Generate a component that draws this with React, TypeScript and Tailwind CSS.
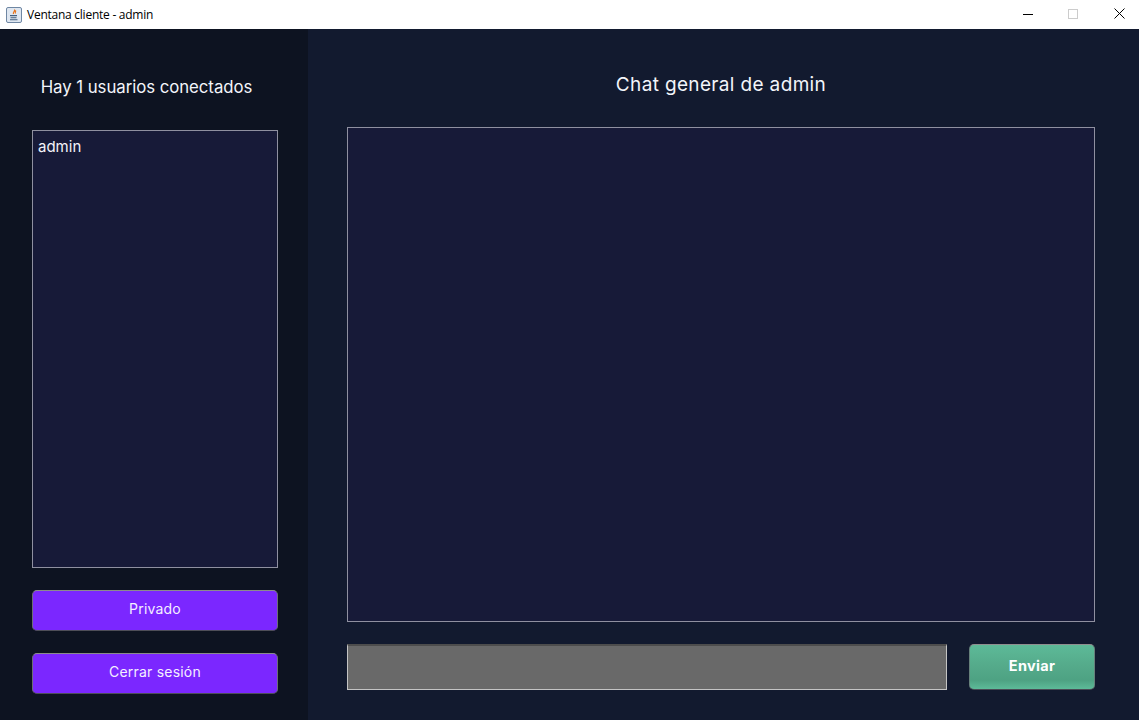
import React from "react";

function JavaIcon() {
  return (
    <svg width="16" height="16" viewBox="0 0 16 16" className="shrink-0">
      <rect x="0.5" y="0.5" width="15" height="15" rx="1.5" fill="#dfe7f1" stroke="#6f87a3" />
      <path d="M8.5 2.5C9.5 4 6.5 5 7.5 7M10 3.5C9 4.5 9 5.5 9.5 6.5" stroke="#e8731a" strokeWidth="1.2" fill="none" />
      <path d="M4 8h7v1.2H4zM4.5 10.2h6v1h-6zM4 12.2h7.5v1H4z" fill="#44607f" />
    </svg>
  );
}

const btnClass =
  "w-full h-[41px] rounded-[5px] border border-t-[#8b8b8b] border-x-[#6d6d78] border-b-[#4e4e58] bg-[#7b27ff] text-[#f4efff] text-[14px] leading-[36px] pb-[5px] text-center tracking-[0.2px]";

export default function App() {
  return (
    <div className="w-[1139px] h-[720px] overflow-hidden flex flex-col font-['Inter','Liberation_Sans',sans-serif]">
      <header className="h-[29px] bg-white flex items-center shrink-0">
        <div className="pl-[6px] pr-[5px] flex items-center">
          <JavaIcon />
        </div>
        <span className="text-[12px] text-black font-['Open_Sans','Liberation_Sans',sans-serif] tracking-[-0.25px]">
          Ventana cliente - admin
        </span>
        <div className="ml-auto flex items-center h-full pb-[2px]">
          <div className="w-[46px] h-full flex items-center justify-center">
            <svg width="10" height="10" viewBox="0 0 10 10"><path d="M0 5.5h10" stroke="#000" strokeWidth="1" /></svg>
          </div>
          <div className="w-[44px] h-full flex items-center justify-center">
            <svg width="10" height="10" viewBox="0 0 10 10"><rect x="0.5" y="0.5" width="9" height="9" fill="none" stroke="#cccccc" /></svg>
          </div>
          <div className="w-[44px] h-full flex items-center justify-center pl-[4px]">
            <svg width="11" height="11" viewBox="0 0 11 11"><path d="M0.5 0.5l10 10M10.5 0.5l-10 10" stroke="#000" strokeWidth="1" /></svg>
          </div>
        </div>
      </header>
      <main className="flex-1 flex min-h-0 bg-[#121a2f]">
        <aside className="w-[308px] shrink-0 bg-[#0d1321] flex flex-col pl-[32px] pr-[30px]">
          <h2 className="h-[101px] pt-[46px] pr-[17px] text-[16.8px] leading-[24px] font-normal text-[#f3f5fa] text-center tracking-[-0.05px] whitespace-nowrap">
            Hay 1 usuarios conectados
          </h2>
          <div className="h-[438px] border border-[#8f90a0] bg-[#171a38] px-[5px] pt-[6px] text-[15px] leading-[20px] text-[#f3f3f8]">
            admin
          </div>
          <button className={btnClass + " mt-[22px]"}>Privado</button>
          <button className={btnClass + " mt-[22px]"}>Cerrar sesión</button>
        </aside>
        <section className="flex-1 flex flex-col pl-[39px] pr-[44px]">
          <h1 className="h-[98px] pt-[43px] text-[19px] leading-[26px] font-normal text-[#f3f5fa] text-center tracking-[0.35px] whitespace-nowrap">
            Chat general de admin
          </h1>
          <div className="h-[495px] border border-[#8f90a0] bg-[#171a38]" />
          <div className="mt-[22px] flex gap-[22px]">
            <input
              className="w-[600px] h-[46px] bg-[#696969] border border-[#c4c4c4] border-t-[2px] border-t-[#4d4d4d] outline-none"
              aria-label="Mensaje"
            />
            <button className="w-[126px] h-[46px] pb-[2px] rounded-[5px] border border-t-[#8f8f8f] border-x-[#66807a] border-b-[#4a4a55] bg-[linear-gradient(180deg,#5dba98_0%,#55ab8b_45%,#4ea283_80%,#5dbb99_100%)] text-white font-bold text-[14.5px] tracking-[0.3px]">
              Enviar
            </button>
          </div>
        </section>
      </main>
    </div>
  );
}
